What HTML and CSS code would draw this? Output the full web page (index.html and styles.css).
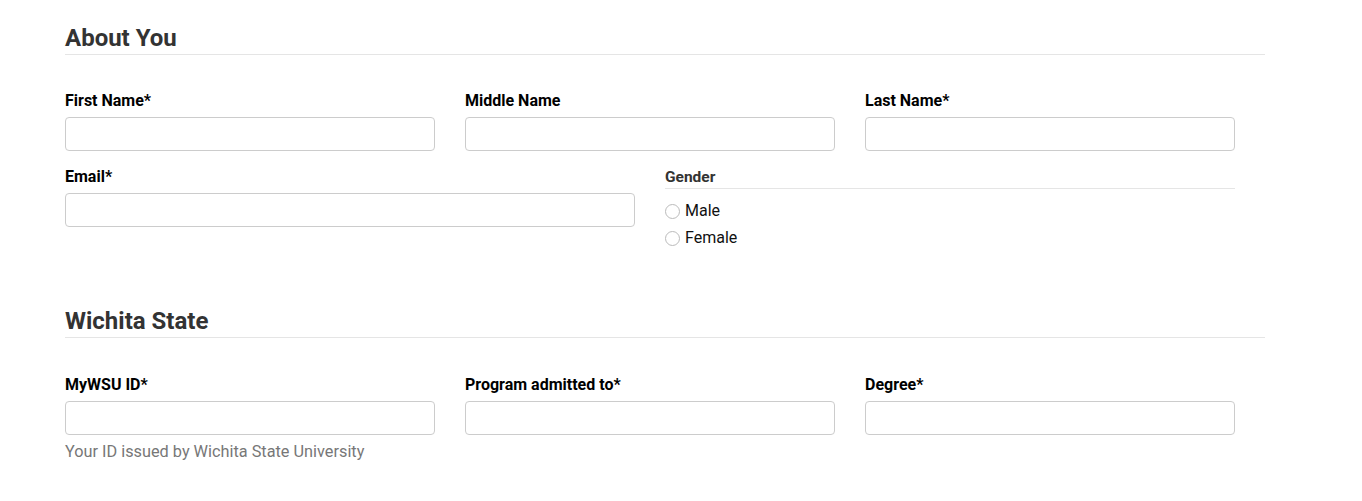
FILE: index.html
```html
<!DOCTYPE html>
<html lang="en">
<head>
<meta charset="utf-8">
<title>Application</title>
<link rel="stylesheet" href="styles.css">
</head>
<body>
<main class="container">
  <section class="section">
    <h2 class="section-title">About You</h2>
    <div class="row">
      <div class="col col-4">
        <label class="field-label">First Name*</label>
        <input class="field-input" type="text">
      </div>
      <div class="col col-4">
        <label class="field-label">Middle Name</label>
        <input class="field-input" type="text">
      </div>
      <div class="col col-4">
        <label class="field-label">Last Name*</label>
        <input class="field-input" type="text">
      </div>
    </div>
    <div class="row">
      <div class="col col-6">
        <label class="field-label">Email*</label>
        <input class="field-input" type="text">
      </div>
      <div class="col col-6">
        <fieldset class="radio-group">
          <legend class="legend">Gender</legend>
          <label class="radio"><span class="radio-dot"></span>Male</label>
          <label class="radio"><span class="radio-dot"></span>Female</label>
        </fieldset>
      </div>
    </div>
  </section>
  <section class="section section-2">
    <h2 class="section-title">Wichita State</h2>
    <div class="row row-wsu">
      <div class="col col-4">
        <label class="field-label">MyWSU ID*</label>
        <input class="field-input" type="text">
        <p class="help">Your ID issued by Wichita State University</p>
      </div>
      <div class="col col-4">
        <label class="field-label">Program admitted to*</label>
        <input class="field-input" type="text">
      </div>
      <div class="col col-4">
        <label class="field-label">Degree*</label>
        <input class="field-input" type="text">
      </div>
    </div>
  </section>
</main>
</body>
</html>
```
FILE: styles.css
```css
* { box-sizing: border-box; }
html, body { margin: 0; padding: 0; background: #fff; }
body {
  font-family: Roboto, "Liberation Sans", sans-serif;
  color: #000;
  font-size: 16px;
}
.container {
  width: 1200px;
  margin-left: 65px;
  padding-top: 22px;
}
.section-title {
  margin: 0;
  font-size: 24px;
  font-weight: 700;
  color: #333;
  line-height: 32px;
  padding-bottom: 0;
  border-bottom: 1px solid #e5e5e5;
}
.section-title + .row { margin-top: 36px; }
.section-title + .row-wsu { margin-top: 37px; }
.row {
  display: flex;
}
.col { padding-right: 30px; }
.col-4 { width: 400px; }
.col-6 { width: 600px; }
.row + .row { margin-top: 16px; }
.field-label {
  display: block;
  font-size: 16px;
  font-weight: 700;
  line-height: 20px;
  margin-bottom: 6px;
}
.field-input {
  display: block;
  width: 100%;
  height: 34px;
  border: 1px solid #ccc;
  border-radius: 4px;
  background: #fff;
  margin: 0;
}
.radio-group {
  border: 0;
  margin: 0;
  padding: 0;
  min-width: 0;
}
.legend {
  display: block;
  width: 100%;
  padding: 1px 0 2px 0;
  font-size: 15.5px;
  font-weight: 700;
  color: #333;
  line-height: 18px;
  border-bottom: 1px solid #e5e5e5;
  margin-bottom: 8px;
}
.radio {
  display: flex;
  align-items: center;
  font-size: 16px;
  line-height: 27px;
  height: 27px;
  color: #111;
}
.radio-dot {
  width: 15px;
  height: 15px;
  border: 1px solid #bbb;
  border-radius: 50%;
  margin-right: 5px;
  margin-top: 2px;
  background: #fff;
}
.section-2 { margin-top: 54px; }
.help {
  margin: 7px 0 0;
  font-size: 16.3px;
  color: #777;
  line-height: 20px;
}
```
